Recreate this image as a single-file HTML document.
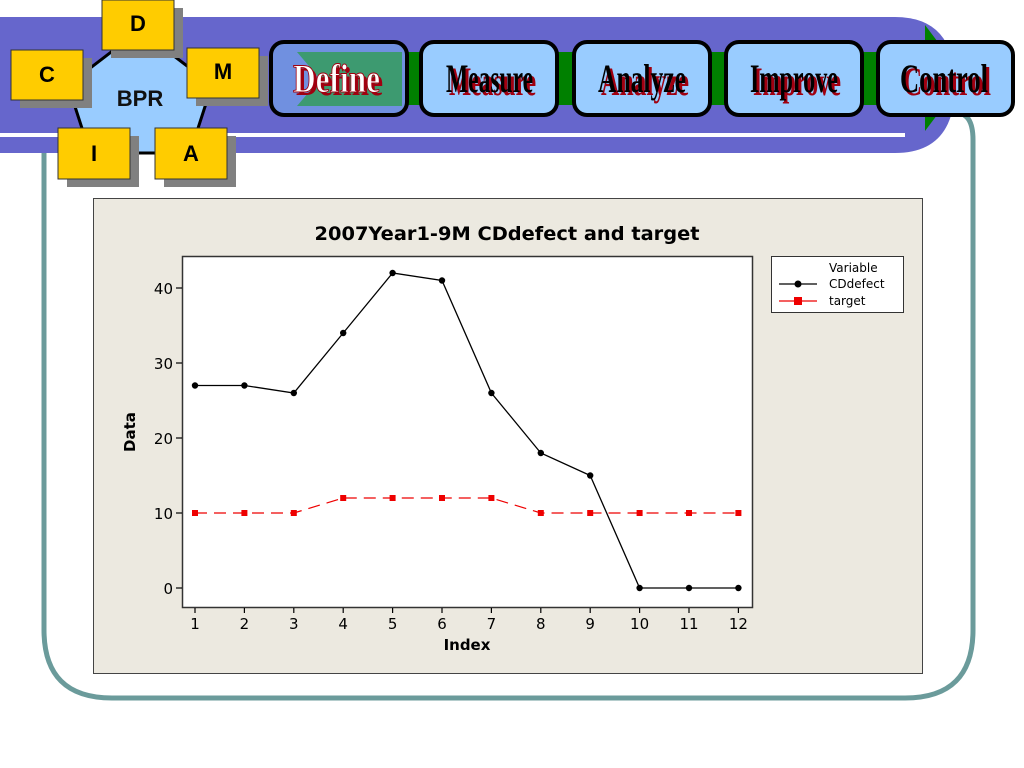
<!DOCTYPE html>
<html><head><meta charset="utf-8"><style>
html,body{margin:0;padding:0;background:#fff;width:1024px;height:768px;overflow:hidden}
svg{display:block}
.bt{font-family:"Liberation Serif",serif;font-weight:bold;font-size:40px}
.lt{font-family:"Liberation Sans",sans-serif;font-weight:bold;font-size:22px}
.ax{font-family:"DejaVu Sans",sans-serif;font-size:15px}
</style></head><body>
<svg width="1024" height="768" viewBox="0 0 1024 768" xmlns="http://www.w3.org/2000/svg">
<path d="M44 150 V630 Q44 698 112 698 H905 Q973 698 973 630 V140 Q973 118 962 114" fill="none" stroke="#6b9b9b" stroke-width="5"/>
<path d="M0 17 H895 Q955 17 955 85 Q955 153 895 153 H0 Z" fill="#6666cc"/>
<rect x="0" y="133" width="905" height="4" fill="#fff"/>
<rect x="380" y="52" width="550" height="53" fill="#008000"/>
<path d="M925 25 L965 78 L925 131 Z" fill="#008000"/>
<g stroke="#000" stroke-width="4">
<rect x="271" y="42" width="136" height="73" rx="13" fill="#7090e0"/>
<rect x="421" y="42" width="136" height="73" rx="13" fill="#99ccff"/>
<rect x="574" y="42" width="136" height="73" rx="13" fill="#99ccff"/>
<rect x="726" y="42" width="136" height="73" rx="13" fill="#99ccff"/>
<rect x="878" y="42" width="135" height="73" rx="13" fill="#99ccff"/>
</g>
<path d="M297 52 H402 V106 H297 L320 79 Z" fill="#3d9a70"/>
<g class="bt" lengthAdjust="spacingAndGlyphs">
<text x="296" y="95" fill="#a00010" textLength="87" lengthAdjust="spacingAndGlyphs">Define</text><text x="293" y="92" fill="#fff" stroke="#a00010" stroke-width="1" textLength="87" lengthAdjust="spacingAndGlyphs">Define</text>
<text x="449" y="95" fill="#a00010" textLength="87" lengthAdjust="spacingAndGlyphs">Measure</text><text x="446" y="92" fill="#000" textLength="87" lengthAdjust="spacingAndGlyphs">Measure</text>
<text x="601" y="95" fill="#a00010" textLength="88" lengthAdjust="spacingAndGlyphs">Analyze</text><text x="598" y="92" fill="#000" textLength="88" lengthAdjust="spacingAndGlyphs">Analyze</text>
<text x="753" y="95" fill="#a00010" textLength="88" lengthAdjust="spacingAndGlyphs">Improve</text><text x="750" y="92" fill="#000" textLength="88" lengthAdjust="spacingAndGlyphs">Improve</text>
<text x="903" y="95" fill="#a00010" textLength="88" lengthAdjust="spacingAndGlyphs">Control</text><text x="900" y="92" fill="#000" textLength="88" lengthAdjust="spacingAndGlyphs">Control</text>
</g>
<path d="M140 30 L212 85 L190 153 L90 153 L68 85 Z" fill="#99ccff" stroke="#000" stroke-width="3"/>
<text x="140" y="106" class="lt" text-anchor="middle" fill="#111">BPR</text>
<g fill="#808080">
<rect x="111" y="8" width="72" height="50"/><rect x="20" y="58" width="72" height="50"/><rect x="196" y="56" width="72" height="50"/><rect x="67" y="136" width="72" height="51"/><rect x="164" y="136" width="72" height="51"/>
</g>
<g fill="#ffcc00" stroke="#333" stroke-width="1">
<rect x="102" y="0" width="72" height="50"/><rect x="11" y="50" width="72" height="50"/><rect x="187" y="48" width="72" height="50"/><rect x="58" y="128" width="72" height="51"/><rect x="155" y="128" width="72" height="51"/>
</g>
<g class="lt" text-anchor="middle" fill="#000">
<text x="138" y="31">D</text><text x="47" y="82">C</text><text x="223" y="79">M</text><text x="94" y="161">I</text><text x="191" y="161">A</text>
</g>
<rect x="93.5" y="198.5" width="829" height="475" fill="#ece9e0" stroke="#444" stroke-width="1"/>
<text x="507" y="240" text-anchor="middle" textLength="385" lengthAdjust="spacingAndGlyphs" style="font-family:'DejaVu Sans',sans-serif;font-weight:bold;font-size:19px">2007Year1-9M CDdefect and target</text>
<rect x="182.5" y="256.5" width="570" height="351" fill="#fff" stroke="#333" stroke-width="1.5"/>
<g stroke="#000" stroke-width="1.2">
<line x1="176" y1="588" x2="182" y2="588"/><line x1="176" y1="513" x2="182" y2="513"/><line x1="176" y1="438" x2="182" y2="438"/><line x1="176" y1="363" x2="182" y2="363"/><line x1="176" y1="288" x2="182" y2="288"/>
</g>
<g class="ax" text-anchor="end">
<text x="173" y="594">0</text><text x="173" y="519">10</text><text x="173" y="444">20</text><text x="173" y="369">30</text><text x="173" y="294">40</text>
</g>
<g stroke="#000" stroke-width="1.2">
<line x1="195" y1="608" x2="195" y2="613"/><line x1="244.4" y1="608" x2="244.4" y2="613"/><line x1="293.8" y1="608" x2="293.8" y2="613"/><line x1="343.2" y1="608" x2="343.2" y2="613"/><line x1="392.6" y1="608" x2="392.6" y2="613"/><line x1="442" y1="608" x2="442" y2="613"/><line x1="491.4" y1="608" x2="491.4" y2="613"/><line x1="540.8" y1="608" x2="540.8" y2="613"/><line x1="590.2" y1="608" x2="590.2" y2="613"/><line x1="639.6" y1="608" x2="639.6" y2="613"/><line x1="689" y1="608" x2="689" y2="613"/><line x1="738.4" y1="608" x2="738.4" y2="613"/>
</g>
<g class="ax" text-anchor="middle">
<text x="195" y="629">1</text><text x="244.4" y="629">2</text><text x="293.8" y="629">3</text><text x="343.2" y="629">4</text><text x="392.6" y="629">5</text><text x="442" y="629">6</text><text x="491.4" y="629">7</text><text x="540.8" y="629">8</text><text x="590.2" y="629">9</text><text x="639.6" y="629">10</text><text x="689" y="629">11</text><text x="738.4" y="629">12</text>
</g>
<text x="467" y="650" text-anchor="middle" style="font-family:'DejaVu Sans',sans-serif;font-weight:bold;font-size:15px">Index</text>
<text transform="translate(135 432) rotate(-90)" text-anchor="middle" style="font-family:'DejaVu Sans',sans-serif;font-weight:bold;font-size:15px">Data</text>
<polyline fill="none" stroke="#e00" stroke-width="1.2" stroke-dasharray="12 7" points="195,513 244.4,513 293.8,513 343.2,498 392.6,498 442,498 491.4,498 540.8,513 590.2,513 639.6,513 689,513 738.4,513"/>
<g fill="#e00">
<rect x="192" y="510" width="6" height="6"/><rect x="241.4" y="510" width="6" height="6"/><rect x="290.8" y="510" width="6" height="6"/><rect x="340.2" y="495" width="6" height="6"/><rect x="389.6" y="495" width="6" height="6"/><rect x="439" y="495" width="6" height="6"/><rect x="488.4" y="495" width="6" height="6"/><rect x="537.8" y="510" width="6" height="6"/><rect x="587.2" y="510" width="6" height="6"/><rect x="636.6" y="510" width="6" height="6"/><rect x="686" y="510" width="6" height="6"/><rect x="735.4" y="510" width="6" height="6"/>
</g>
<polyline fill="none" stroke="#000" stroke-width="1.3" points="195,385.5 244.4,385.5 293.8,393 343.2,333 392.6,273 442,280.5 491.4,393 540.8,453 590.2,475.5 639.6,588 689,588 738.4,588"/>
<g fill="#000">
<circle cx="195" cy="385.5" r="3.2"/><circle cx="244.4" cy="385.5" r="3.2"/><circle cx="293.8" cy="393" r="3.2"/><circle cx="343.2" cy="333" r="3.2"/><circle cx="392.6" cy="273" r="3.2"/><circle cx="442" cy="280.5" r="3.2"/><circle cx="491.4" cy="393" r="3.2"/><circle cx="540.8" cy="453" r="3.2"/><circle cx="590.2" cy="475.5" r="3.2"/><circle cx="639.6" cy="588" r="3.2"/><circle cx="689" cy="588" r="3.2"/><circle cx="738.4" cy="588" r="3.2"/>
</g>
<rect x="771.5" y="256.5" width="132" height="56" fill="#fff" stroke="#333" stroke-width="1"/>
<g style="font-family:'DejaVu Sans',sans-serif;font-size:12px">
<text x="829" y="272">Variable</text><text x="829" y="288">CDdefect</text><text x="829" y="305">target</text>
</g>
<line x1="779" y1="284" x2="817" y2="284" stroke="#000" stroke-width="1.2"/><circle cx="798" cy="284" r="3.5"/>
<line x1="779" y1="301" x2="817" y2="301" stroke="#e00" stroke-width="1.2"/><rect x="794" y="297" width="8" height="8" fill="#e00"/>
</svg>
</body></html>
